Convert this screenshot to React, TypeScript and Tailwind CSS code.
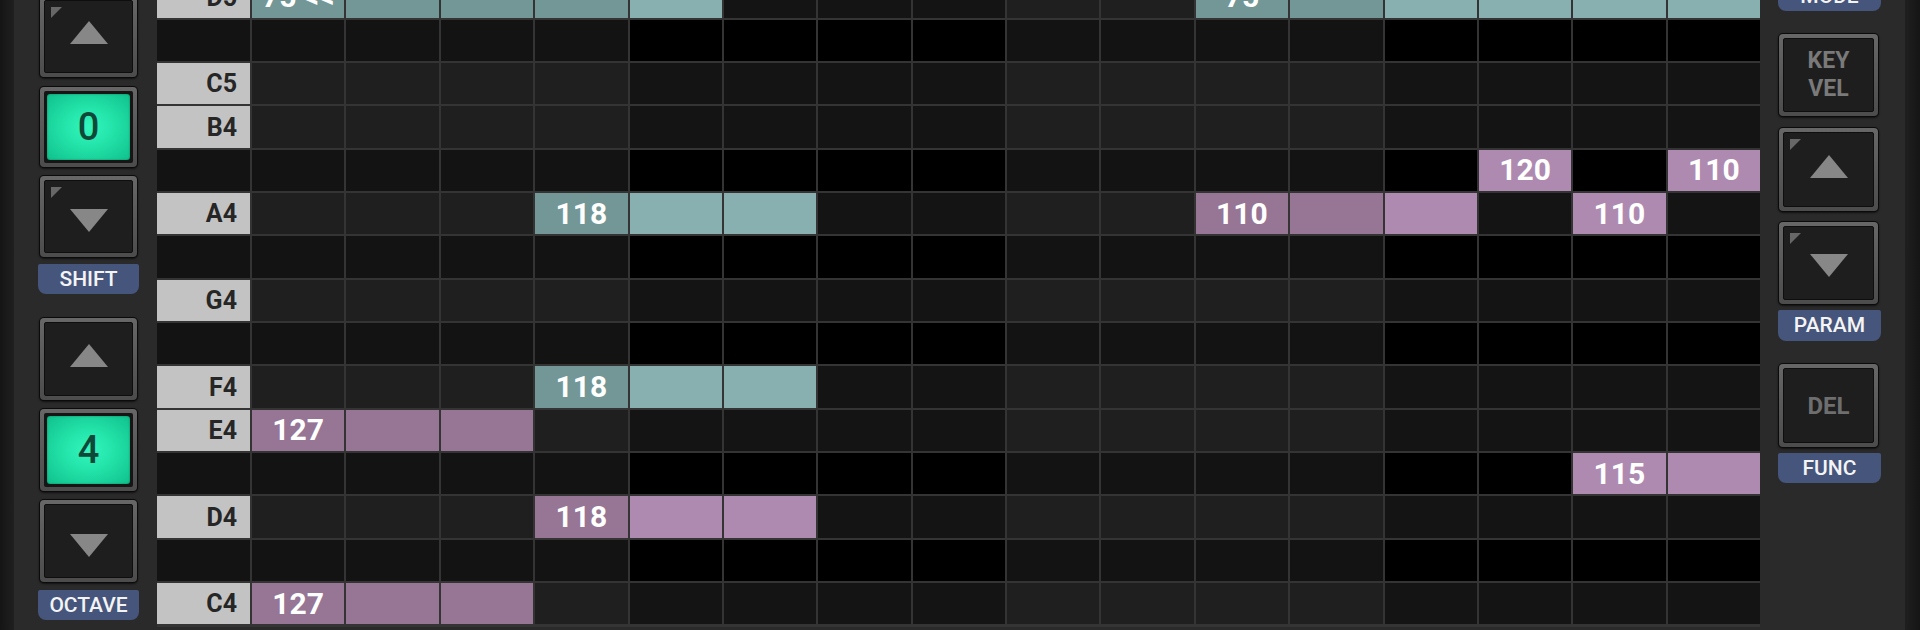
import React from "react";

type NoteColor = "teal" | "purple";
interface Note {
  row: number;
  start: number;
  len: number;
  color: NoteColor;
  text: string;
}

const ROWS: { label: string; black: boolean }[] = [
  { label: "D5", black: false },
  { label: "", black: true },
  { label: "C5", black: false },
  { label: "B4", black: false },
  { label: "", black: true },
  { label: "A4", black: false },
  { label: "", black: true },
  { label: "G4", black: false },
  { label: "", black: true },
  { label: "F4", black: false },
  { label: "E4", black: false },
  { label: "", black: true },
  { label: "D4", black: false },
  { label: "", black: true },
  { label: "C4", black: false },
];

const NOTES: Note[] = [
  { row: 0, start: 0, len: 5, color: "teal", text: "75 <<" },
  { row: 0, start: 10, len: 6, color: "teal", text: "75" },
  { row: 4, start: 13, len: 1, color: "purple", text: "120" },
  { row: 4, start: 15, len: 1, color: "purple", text: "110" },
  { row: 5, start: 3, len: 3, color: "teal", text: "118" },
  { row: 5, start: 10, len: 3, color: "purple", text: "110" },
  { row: 5, start: 14, len: 1, color: "purple", text: "110" },
  { row: 9, start: 3, len: 3, color: "teal", text: "118" },
  { row: 10, start: 0, len: 3, color: "purple", text: "127" },
  { row: 11, start: 14, len: 2, color: "purple", text: "115" },
  { row: 12, start: 3, len: 3, color: "purple", text: "118" },
  { row: 14, start: 0, len: 3, color: "purple", text: "127" },
];

function cellInfo(row: number, col: number): { cls: string; text: string } {
  const black = ROWS[row].black;
  const lightGroup = Math.floor(col / 4) % 2 === 0;
  for (const n of NOTES) {
    if (n.row === row && col >= n.start && col < n.start + n.len) {
      const text = col === n.start ? n.text : "";
      if (n.color === "teal") {
        return { cls: lightGroup ? "bg-[#739697]" : "bg-[#88b0b0]", text };
      }
      return { cls: lightGroup ? "bg-[#967595]" : "bg-[#ae8ab1]", text };
    }
  }
  if (black) {
    return { cls: lightGroup ? "bg-[#131313]" : "bg-[#000000]", text: "" };
  }
  return { cls: lightGroup ? "bg-[#1f1f1f]" : "bg-[#141414]", text: "" };
}

function Arrow({ dir, right }: { dir: "up" | "down"; right?: boolean }) {
  return (
    <svg
      width="38"
      height="23"
      viewBox="0 0 38 23"
      className={dir === "up" ? (right ? "-translate-y-[3px]" : "-translate-y-[4px]") : right ? "translate-y-[2px]" : "translate-y-[4px]"}
    >
      {dir === "up" ? (
        <polygon points="19,0 38,23 0,23" fill="#878787" />
      ) : (
        <polygon points="0,0 38,0 19,23" fill="#878787" />
      )}
    </svg>
  );
}

function Corner() {
  return (
    <svg width="11" height="11" viewBox="0 0 11 11" className="absolute left-[6px] top-[6px]">
      <polygon points="0,0 11,0 0,11" fill="#676767" />
    </svg>
  );
}

function Frame({
  w,
  h,
  children,
  className = "",
}: {
  w: string;
  h: string;
  children: React.ReactNode;
  className?: string;
}) {
  return (
    <div className={`${w} ${h} ${className} shrink-0 rounded-[5px] bg-[#0b0b0b] p-[1px] shadow-[0_1px_2px_rgba(0,0,0,0.6)]`}>
      <div className="h-full w-full rounded-[4px] bg-gradient-to-b from-[#676767] to-[#4c4c4c] p-[4px]">
        {children}
      </div>
    </div>
  );
}

function DarkButton({
  w,
  h,
  className,
  corner,
  children,
}: {
  w: string;
  h: string;
  className?: string;
  corner?: boolean;
  children?: React.ReactNode;
}) {
  return (
    <Frame w={w} h={h} className={className}>
      <div className="relative flex h-full w-full items-center justify-center rounded-[2px] border border-[#0e0e0e] bg-[#1e1e1e]">
        {corner && <Corner />}
        {children}
      </div>
    </Frame>
  );
}

function GreenButton({ w, h, className, value }: { w: string; h: string; className?: string; value: string }) {
  return (
    <Frame w={w} h={h} className={className}>
      <div className="h-full w-full rounded-[2px] bg-[#151515] p-[3px]">
        <div className="flex h-full w-full items-center justify-center rounded-[3px] bg-[radial-gradient(ellipse_at_center,#33f7be_0%,#22e2a8_45%,#10c08c_100%)] shadow-[inset_0_0_2px_rgba(0,0,0,0.4)]">
          <span className="text-[38px] font-medium leading-none text-[#0f4838]">{value}</span>
        </div>
      </div>
    </Frame>
  );
}

function Tag({ text, w, className = "" }: { text: string; w: string; className?: string }) {
  return (
    <div
      className={`${w} ${className} flex h-[30px] shrink-0 items-center justify-center rounded-t-[2px] rounded-b-[8px] bg-[#46557b] text-[21px] font-medium leading-none text-[#f4f4f4]`}
    >
      {text}
    </div>
  );
}

export default function App() {
  return (
    <div className="flex h-[630px] w-[1920px] overflow-hidden bg-[#2a2a2a] font-['Roboto','Liberation_Sans',sans-serif]">
      {/* left edge */}
      <div className="h-full w-[14px] shrink-0 bg-gradient-to-r from-[#151515] to-[#1f1f1f]" />

      {/* left panel */}
      <div className="flex w-[143px] shrink-0 flex-col pl-[25px]">
        <DarkButton w="w-[99px]" h="h-[83px]" className="-mt-[5px]" corner>
          <Arrow dir="up" />
        </DarkButton>
        <GreenButton w="w-[99px]" h="h-[82px]" className="mt-[8px]" value="0" />
        <DarkButton w="w-[99px]" h="h-[83px]" className="mt-[7px]" corner>
          <Arrow dir="down" />
        </DarkButton>
        <Tag text="SHIFT" w="w-[101px]" className="-ml-[1px] mt-[6px] h-[29px]" />
        <DarkButton w="w-[99px]" h="h-[84px]" className="mt-[23px]">
          <Arrow dir="up" />
        </DarkButton>
        <GreenButton w="w-[99px]" h="h-[84px]" className="mt-[7px]" value="4" />
        <DarkButton w="w-[99px]" h="h-[84px]" className="mt-[7px]">
          <Arrow dir="down" />
        </DarkButton>
        <Tag text="OCTAVE" w="w-[101px]" className="-ml-[1px] mt-[7px]" />
      </div>

      {/* grid */}
      <div className="-mt-[23.5px] grid h-[650px] w-[1603px] shrink-0 self-start grid-cols-[93px_repeat(16,minmax(0,1fr))] grid-rows-[repeat(15,41.33px)] gap-[2px] bg-[#343434] pb-[2px]">
        {ROWS.map((r, ri) => (
          <React.Fragment key={ri}>
            <div
              className={`flex items-center justify-end pr-[13px] text-[25px] font-bold leading-none text-[#262626] ${
                r.black ? "bg-[#131313]" : "bg-[#c3c3c3]"
              }`}
            >
              {r.label}
            </div>
            {Array.from({ length: 16 }).map((_, ci) => {
              const c = cellInfo(ri, ci);
              return (
                <div
                  key={ci}
                  className={`flex items-center justify-center whitespace-nowrap text-[30px] font-bold leading-none text-white ${c.cls}`}
                >
                  {c.text}
                </div>
              );
            })}
          </React.Fragment>
        ))}
      </div>

      {/* right panel */}
      <div className="flex w-[145px] shrink-0 flex-col pl-[18px]">
        <Tag text="MODE" w="w-[103px]" className="-mt-[19px]" />
        <DarkButton w="w-[101px]" h="h-[84px]" className="mt-[22px]">
          <div className="flex flex-col items-center text-[23px] font-bold leading-[28px] text-[#7a7a7a]">
            <span>KEY</span>
            <span>VEL</span>
          </div>
        </DarkButton>
        <DarkButton w="w-[101px]" h="h-[85px]" className="mt-[10px]" corner>
          <Arrow dir="up" right />
        </DarkButton>
        <DarkButton w="w-[101px]" h="h-[84px]" className="mt-[9px]" corner>
          <Arrow dir="down" right />
        </DarkButton>
        <Tag text="PARAM" w="w-[103px]" className="mt-[5px] h-[31px]" />
        <DarkButton w="w-[101px]" h="h-[85px]" className="mt-[22px]">
          <span className="text-[24px] font-bold leading-none text-[#6e6e6e]">DEL</span>
        </DarkButton>
        <Tag text="FUNC" w="w-[103px]" className="mt-[5px]" />
      </div>

      {/* right edge */}
      <div className="h-full flex-1 bg-gradient-to-r from-[#1f1f1f] to-[#151515]" />
    </div>
  );
}
